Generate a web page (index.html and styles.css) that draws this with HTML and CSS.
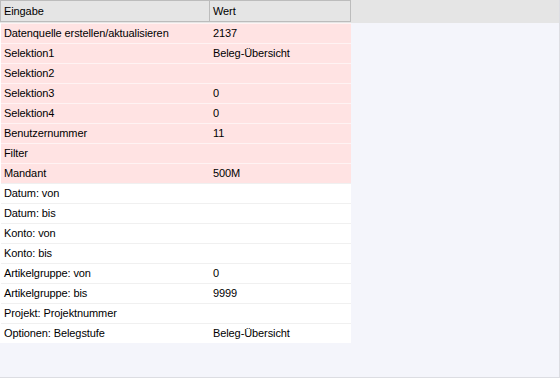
FILE: index.html
```html
<!DOCTYPE html>
<html lang="de">
<head>
    <meta charset="UTF-8">
    <title>Parameter</title>
    <link rel="stylesheet" href="styles.css">
</head>
<body>
    <div class="grid-view">
        <div class="grid-head">
            <div class="head-cell col-name">Eingabe</div>
            <div class="head-cell col-value">Wert</div>
        </div>
        <div class="grid-body">
            <div class="row required"><div class="cell col-name">Datenquelle erstellen/aktualisieren</div><div class="cell col-value">2137</div></div>
            <div class="row required"><div class="cell col-name">Selektion1</div><div class="cell col-value">Beleg-Übersicht</div></div>
            <div class="row required"><div class="cell col-name">Selektion2</div><div class="cell col-value"></div></div>
            <div class="row required"><div class="cell col-name">Selektion3</div><div class="cell col-value">0</div></div>
            <div class="row required"><div class="cell col-name">Selektion4</div><div class="cell col-value">0</div></div>
            <div class="row required"><div class="cell col-name">Benutzernummer</div><div class="cell col-value">11</div></div>
            <div class="row required"><div class="cell col-name">Filter</div><div class="cell col-value"></div></div>
            <div class="row required"><div class="cell col-name">Mandant</div><div class="cell col-value">500M</div></div>
            <div class="row"><div class="cell col-name">Datum: von</div><div class="cell col-value"></div></div>
            <div class="row"><div class="cell col-name">Datum: bis</div><div class="cell col-value"></div></div>
            <div class="row"><div class="cell col-name">Konto: von</div><div class="cell col-value"></div></div>
            <div class="row"><div class="cell col-name">Konto: bis</div><div class="cell col-value"></div></div>
            <div class="row"><div class="cell col-name">Artikelgruppe: von</div><div class="cell col-value">0</div></div>
            <div class="row"><div class="cell col-name">Artikelgruppe: bis</div><div class="cell col-value">9999</div></div>
            <div class="row"><div class="cell col-name">Projekt: Projektnummer</div><div class="cell col-value"></div></div>
            <div class="row"><div class="cell col-name">Optionen: Belegstufe</div><div class="cell col-value">Beleg-Übersicht</div></div>
        </div>
    </div>
</body>
</html>
```

FILE: styles.css
```css
body { margin: 0; font-family: "Liberation Sans", Arial, sans-serif; font-size: 11px; letter-spacing: -0.1px; color: #000; }
.grid-view { width: 559px; height: 377px; background: #f4f5fb; border-right: 1px solid #dcdde2; border-bottom: 1px solid #dcdde2; }

/* column header */
.grid-head { display: flex; height: 23px; background: #e5e5e5; }
.head-cell { box-sizing: border-box; height: 22px; line-height: 20px; padding-left: 3px; border: 1px solid #bcbcbc; }
.head-cell.col-name { width: 210px; }
.head-cell.col-value { width: 141px; border-left: none; }

/* rows */
.grid-body { width: 350px; border-left: 1px solid #fff; }
.row { display: flex; height: 19px; border-top: 1px solid #f0f0f0; background: #fff; }
.row.required { background: #ffe3e3; border-top-color: #fff3f3; }
.cell { line-height: 19px; padding-left: 3px; white-space: nowrap; }
.cell.col-name { width: 206px; }
.cell.col-value { flex: 1; }
```
